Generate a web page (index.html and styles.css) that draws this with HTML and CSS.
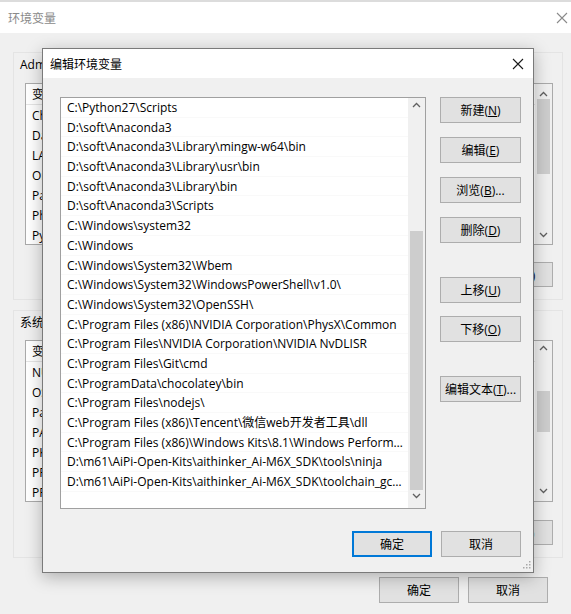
FILE: index.html
```html
<!DOCTYPE html>
<html lang="zh-CN">
<head>
<meta charset="utf-8">
<title>编辑环境变量</title>
<link rel="stylesheet" href="styles.css">
</head>
<body>
<div class="win">
  <div class="win-title">
    <span class="win-title-text">环境变量</span>
    <svg class="win-close" width="12" height="12" viewBox="0 0 12 12"><path d="M1 1L11 11M11 1L1 11" stroke="#8a8a8a" stroke-width="1.1" fill="none"/></svg>
  </div>
  <div class="win-body">
    <section class="grp grp-user">
      <div class="grp-label">Administrator 的用户变量(<u>U</u>)</div>
      <div class="lv lv-user">
        <div class="lv-main">
          <div class="lv-head"><span class="c1">变量</span><span>值</span></div>
          <div class="lv-row"><span class="c1">ChocolateyLastPathUpdate</span><span>133012345678901234</span></div>
          <div class="lv-row"><span class="c1">DataGrip</span><span>D:\soft\DataGrip\bin;</span></div>
          <div class="lv-row"><span class="c1">LANG</span><span>zh_CN.UTF-8</span></div>
          <div class="lv-row"><span class="c1">OneDrive</span><span>C:\Users\Administrator\OneDrive</span></div>
          <div class="lv-row"><span class="c1">Path</span><span>C:\Python27\Scripts;D:\soft\Anaconda3</span></div>
          <div class="lv-row"><span class="c1">PhpStorm</span><span>D:\soft\PhpStorm\bin;</span></div>
          <div class="lv-row"><span class="c1">PyCharm</span><span>D:\soft\PyCharm\bin;</span></div>
        </div>
        <div class="vscroll vs-user">
          <svg class="chev" width="9" height="6" viewBox="0 0 9 6"><path d="M1 5L4.5 1.5L8 5" stroke="#606060" stroke-width="1.3" fill="none"/></svg>
          <div class="vs-track"><div class="vs-thumb"></div></div>
          <svg class="chev" width="9" height="6" viewBox="0 0 9 6"><path d="M1 1L4.5 4.5L8 1" stroke="#606060" stroke-width="1.3" fill="none"/></svg>
        </div>
      </div>
      <div class="grp-btns">
        <button class="btn">新建(<u>N</u>)...</button>
        <button class="btn">编辑(<u>E</u>)...</button>
        <button class="btn">删除(<u>D</u>)</button>
      </div>
    </section>

    <section class="grp grp-sys">
      <div class="grp-label">系统变量(<u>S</u>)</div>
      <div class="lv lv-sys">
        <div class="lv-main">
          <div class="lv-head"><span class="c1">变量</span><span>值</span></div>
          <div class="lv-row"><span class="c1">NUMBER_OF_PROCESSORS</span><span>8</span></div>
          <div class="lv-row"><span class="c1">OS</span><span>Windows_NT</span></div>
          <div class="lv-row"><span class="c1">Path</span><span>C:\Windows\system32;C:\Windows</span></div>
          <div class="lv-row"><span class="c1">PATHEXT</span><span>.COM;.EXE;.BAT;.CMD</span></div>
          <div class="lv-row"><span class="c1">PKG_CONFIG_PATH</span><span>D:\soft\pkgconfig</span></div>
          <div class="lv-row"><span class="c1">PROCESSOR_ARCHITECTURE</span><span>AMD64</span></div>
          <div class="lv-row"><span class="c1">PROCESSOR_IDENTIFIER</span><span>Intel64 Family 6</span></div>
        </div>
        <div class="vscroll vs-sys">
          <svg class="chev" width="9" height="6" viewBox="0 0 9 6"><path d="M1 5L4.5 1.5L8 5" stroke="#606060" stroke-width="1.3" fill="none"/></svg>
          <div class="vs-track"><div class="vs-thumb"></div></div>
          <svg class="chev" width="9" height="6" viewBox="0 0 9 6"><path d="M1 1L4.5 4.5L8 1" stroke="#606060" stroke-width="1.3" fill="none"/></svg>
        </div>
      </div>
      <div class="grp-btns">
        <button class="btn">新建(<u>W</u>)...</button>
        <button class="btn">编辑(<u>I</u>)...</button>
        <button class="btn">删除(<u>L</u>)</button>
      </div>
    </section>

    <div class="win-foot">
      <button class="btn btn-foot">确定</button>
      <button class="btn btn-foot">取消</button>
    </div>
  </div>
</div>

<div class="dlg">
  <div class="dlg-title">
    <span class="dlg-title-text">编辑环境变量</span>
    <svg class="dlg-close" width="12" height="12" viewBox="0 0 12 12"><path d="M1 1L11 11M11 1L1 11" stroke="#1a1a1a" stroke-width="1.1" fill="none"/></svg>
  </div>
  <div class="dlg-body">
    <div class="dlg-main">
      <div class="plist">
        <div class="plist-items">
          <div class="prow">C:\Python27\Scripts</div>
          <div class="prow">D:\soft\Anaconda3</div>
          <div class="prow">D:\soft\Anaconda3\Library\mingw-w64\bin</div>
          <div class="prow">D:\soft\Anaconda3\Library\usr\bin</div>
          <div class="prow">D:\soft\Anaconda3\Library\bin</div>
          <div class="prow">D:\soft\Anaconda3\Scripts</div>
          <div class="prow">C:\Windows\system32</div>
          <div class="prow">C:\Windows</div>
          <div class="prow">C:\Windows\System32\Wbem</div>
          <div class="prow">C:\Windows\System32\WindowsPowerShell\v1.0\</div>
          <div class="prow">C:\Windows\System32\OpenSSH\</div>
          <div class="prow">C:\Program Files (x86)\NVIDIA Corporation\PhysX\Common</div>
          <div class="prow">C:\Program Files\NVIDIA Corporation\NVIDIA NvDLISR</div>
          <div class="prow">C:\Program Files\Git\cmd</div>
          <div class="prow">C:\ProgramData\chocolatey\bin</div>
          <div class="prow">C:\Program Files\nodejs\</div>
          <div class="prow">C:\Program Files (x86)\Tencent\微信web开发者工具\dll</div>
          <div class="prow">C:\Program Files (x86)\Windows Kits\8.1\Windows Performance Toolkit\</div>
          <div class="prow">D:\m61\AiPi-Open-Kits\aithinker_Ai-M6X_SDK\tools\ninja</div>
          <div class="prow">D:\m61\AiPi-Open-Kits\aithinker_Ai-M6X_SDK\toolchain_gcc_t-head_windows\bin</div>
        </div>
        <div class="vscroll vs-dlg">
          <svg class="chev" width="9" height="6" viewBox="0 0 9 6"><path d="M1 5L4.5 1.5L8 5" stroke="#606060" stroke-width="1.3" fill="none"/></svg>
          <div class="vs-track"><div class="vs-thumb"></div></div>
          <svg class="chev" width="9" height="6" viewBox="0 0 9 6"><path d="M1 1L4.5 4.5L8 1" stroke="#606060" stroke-width="1.3" fill="none"/></svg>
        </div>
      </div>
      <div class="side">
        <button class="btn sbtn">新建(<u>N</u>)</button>
        <button class="btn sbtn">编辑(<u>E</u>)</button>
        <button class="btn sbtn">浏览(<u>B</u>)...</button>
        <button class="btn sbtn">删除(<u>D</u>)</button>
        <button class="btn sbtn sbtn-up">上移(<u>U</u>)</button>
        <button class="btn sbtn">下移(<u>O</u>)</button>
        <button class="btn sbtn sbtn-text">编辑文本(<u>T</u>)...</button>
      </div>
    </div>
    <div class="dlg-foot">
      <button class="btn dbtn dbtn-default">确定</button>
      <button class="btn dbtn">取消</button>
    </div>
    <svg class="grip" width="8" height="8" viewBox="0 0 8 8"><g fill="#a8a8a8"><rect x="6" y="0" width="1.5" height="1.5"/><rect x="3" y="3" width="1.5" height="1.5"/><rect x="6" y="3" width="1.5" height="1.5"/><rect x="0" y="6" width="1.5" height="1.5"/><rect x="3" y="6" width="1.5" height="1.5"/><rect x="6" y="6" width="1.5" height="1.5"/></g></svg>
  </div>
</div>
</body>
</html>
```

FILE: styles.css
```css
* { box-sizing: border-box; }
html, body { margin: 0; padding: 0; }
body {
  width: 571px;
  height: 614px;
  overflow: hidden;
  background: #f0f0f0;
  font-family: "Open Sans", "Noto Sans CJK SC", sans-serif;
  font-size: 12px;
  color: #000;
  position: relative;
}
u { text-decoration: underline; text-underline-offset: 1px; }

/* background window */
.win { width: 571px; height: 614px; display: flex; flex-direction: column; }
.win-title {
  height: 33px;
  background: #fff;
  border-top: 2px solid #dcdcdc;
  display: flex;
  align-items: center;
  justify-content: space-between;
  padding: 0 3px 0 8px;
  flex: none;
}
.win-title-text { color: #8a8a8a; font-size: 12px; }
.win-body { flex: 1; display: flex; flex-direction: column; padding: 0 8px 0 13px; }

.grp {
  border: 1px solid #e4e4e4;
  display: flex;
  flex-direction: column;
  padding: 1px 9px 12px 11px;
}
.grp-user { margin-top: 19px; height: 248px; }
.grp-sys { margin-top: 10px; height: 248px; }
.grp-label { height: 20px; line-height: 20px; margin: 1px 0 0 -5px; }

.lv {
  border: 1px solid #aaa;
  background: #fff;
  display: flex;
  overflow: hidden;
}
.lv-user { margin-top: 8px; height: 163px; }
.lv-sys { margin-top: 7px; height: 162px; }
.lv-main { flex: 1; overflow: hidden; }
.lv-head { height: 21px; display: flex; align-items: center; border-bottom: 1px solid #e5e5e5; }
.lv-row { height: 20px; display: flex; align-items: center; white-space: nowrap; }
.c1 { width: 190px; padding-left: 6px; flex: none; overflow: hidden; }

.vscroll {
  width: 17px;
  flex: none;
  background: #f0f0f0;
  display: flex;
  flex-direction: column;
  align-items: center;
}
.chev { flex: none; display: block; }
.vs-track { flex: 1; width: 100%; display: flex; flex-direction: column; padding: 0 2px; }
.vs-thumb { background: #cdcdcd; }
.vs-user { padding: 7px 0 6px; }
.vs-user .vs-track { padding-top: 2px; }
.vs-user .vs-thumb { height: 75px; }
.vs-sys { padding: 4px 0 7px; }
.vs-sys .vs-track { padding-top: 40px; }
.vs-sys .vs-thumb { height: 41px; }

.grp-btns { display: flex; justify-content: flex-end; gap: 9px; margin-top: 17px; }
.grp-sys .grp-btns { margin-top: 18px; }

.btn {
  font: inherit;
  color: #000;
  background: #e1e1e1;
  border: 1px solid #adadad;
  padding: 0;
  margin: 0;
  text-align: center;
  white-space: nowrap;
}
.grp-btns .btn { width: 75px; height: 25px; }
.win-foot { display: flex; justify-content: flex-end; gap: 9px; margin-top: 19px; padding-right: 15px; }
.btn-foot { width: 80px; height: 26px; }

/* foreground dialog */
.dlg {
  position: absolute;
  left: 42px;
  top: 48px;
  width: 492px;
  height: 525px;
  border: 1px solid #7a7a7a;
  background: #f0f0f0;
  box-shadow: 0 4px 16px rgba(0, 0, 0, 0.28);
  display: flex;
  flex-direction: column;
}
.dlg-title {
  height: 29px;
  background: #fff;
  display: flex;
  align-items: center;
  justify-content: space-between;
  padding: 0 9px 0 7px;
  flex: none;
}
.dlg-title-text { font-size: 12px; }
.dlg-body { flex: 1; display: flex; flex-direction: column; padding: 19px 12px 0 17px; position: relative; }
.dlg-main { display: flex; gap: 14px; }
.plist {
  width: 366px;
  height: 412px;
  border: 1px solid #a0a0a0;
  background: #fff;
  display: flex;
  overflow: hidden;
}
.plist-items { flex: 1; min-width: 0; }
.prow {
  height: 19.7px;
  line-height: 19.7px;
  padding: 0 3px 0 6px;
  white-space: nowrap;
  overflow: hidden;
  text-overflow: ellipsis;
  border-bottom: 1px solid #f9f9f9;
}
.vs-dlg { padding: 4px 0 9px; }
.vs-dlg .vs-track { padding-top: 123px; padding-bottom: 3px; }
.vs-dlg .vs-thumb { flex: 1; }

.side { display: flex; flex-direction: column; }
.sbtn { width: 81px; height: 26px; margin-bottom: 14px; }
.sbtn-up { margin-top: 20px; margin-bottom: 13px; }
.sbtn-text { margin-top: 20px; }

.dlg-foot { display: flex; justify-content: flex-end; gap: 9px; margin-top: 22px; }
.dbtn { width: 80px; height: 26px; }
.dbtn-default { border: 2px solid #0078d7; }
.grip { position: absolute; right: 2px; bottom: 3px; }
```
